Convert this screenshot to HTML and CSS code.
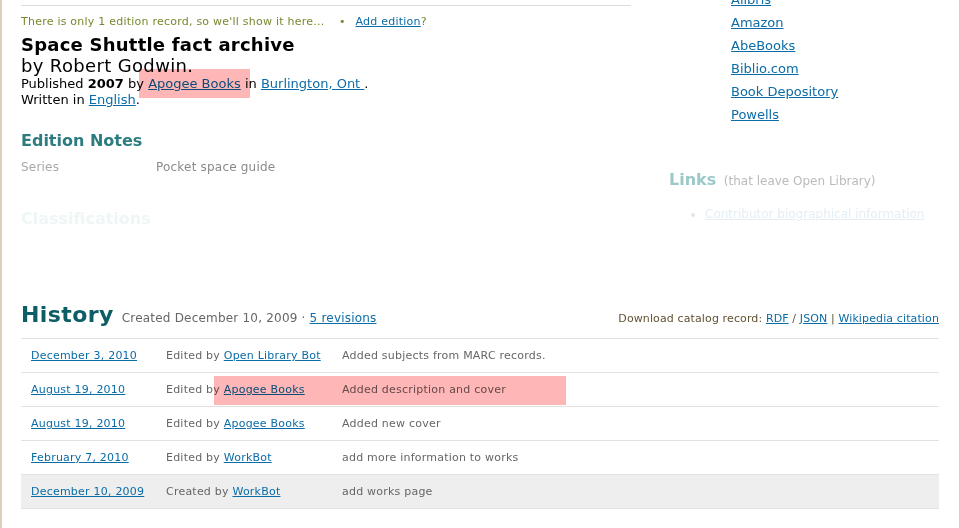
FILE: index.html
```html
<!DOCTYPE html>
<html>
<head>
<meta charset="utf-8">
<link rel="stylesheet" href="styles.css">
</head>
<body>
<div class="page">
  <div class="top">
    <div class="main">
      <div class="rule"></div>
      <p class="notice">There is only 1 edition record, so we'll show it here... <span class="dot">•</span> <a href="#">Add edition</a>?</p>
      <h1 class="title">Space Shuttle fact archive</h1>
      <h2 class="author">by Robert Godwin.</h2>
      <p class="meta">Published <b>2007</b> by <a href="#">Apogee Books</a> in <a href="#">Burlington, Ont </a>.</p>
      <p class="meta">Written in <a href="#">English</a>.</p>
      <h3 class="section">Edition Notes</h3>
      <div class="note-row"><span class="note-label">Series</span><span class="note-value">Pocket space guide</span></div>
      <h3 class="section faded">Classifications</h3>
    </div>
    <div class="side">
      <ul class="shops">
        <li><a href="#">Alibris </a></li>
        <li><a href="#">Amazon </a></li>
        <li><a href="#">AbeBooks </a></li>
        <li><a href="#">Biblio.com </a></li>
        <li><a href="#">Book Depository </a></li>
        <li><a href="#">Powells </a></li>
      </ul>
      <h3 class="links-head">Links <span class="links-sub">(that leave Open Library)</span></h3>
      <ul class="ext">
        <li><a href="#">Contributor biographical information </a></li>
      </ul>
    </div>
  </div>

  <div class="history">
    <div class="history-head">
      <div class="hh-left"><span class="hh-title">History</span> <span class="hh-created">Created December 10, 2009 · <a href="#">5 revisions</a></span></div>
      <div class="hh-right">Download catalog record: <a href="#">RDF</a> / <a href="#">JSON</a> | <a href="#">Wikipedia citation</a></div>
    </div>
    <table class="revs">
      <tr><td class="c-date"><a href="#">December 3, 2010 </a></td><td class="c-by">Edited by <a href="#">Open Library Bot </a></td><td class="c-com">Added subjects from MARC records.</td></tr>
      <tr><td class="c-date"><a href="#">August 19, 2010 </a></td><td class="c-by">Edited by <a href="#">Apogee Books </a></td><td class="c-com">Added description and cover</td></tr>
      <tr><td class="c-date"><a href="#">August 19, 2010 </a></td><td class="c-by">Edited by <a href="#">Apogee Books </a></td><td class="c-com">Added new cover</td></tr>
      <tr><td class="c-date"><a href="#">February 7, 2010 </a></td><td class="c-by">Edited by <a href="#">WorkBot </a></td><td class="c-com">add more information to works</td></tr>
      <tr class="first"><td class="c-date"><a href="#">December 10, 2009 </a></td><td class="c-by">Created by <a href="#">WorkBot </a></td><td class="c-com">add works page</td></tr>
    </table>
  </div>

  <div class="hl hl-1"></div>
  <div class="hl hl-2"></div>
</div>
</body>
</html>
```

FILE: styles.css
```css
html, body {
  margin: 0;
  padding: 0;
  background: #fff;
  overflow: hidden;
}
body {
  font-family: "DejaVu Sans", sans-serif;
  color: #000;
}
a {
  color: #0b6ca8;
  text-decoration: underline;
}
.page {
  position: relative;
  width: 957px;
  height: 528px;
  border-left: 2px solid #d8d2bd;
  border-right: 1px solid #d8d2bd;
  box-sizing: content-box;
  overflow: hidden;
}
.top {
  display: flex;
  height: 292px;
}
.main {
  width: 610px;
  margin-left: 19px;
}
.rule {
  margin-top: 5px;
  height: 1px;
  background: #dcdcdc;
}
.notice {
  margin: 9px 0 0;
  font-size: 11px;
  line-height: 14px;
  color: #76892e;
  letter-spacing: 0.23px;
}
.notice .dot {
  margin: 0 6px 0 11px;
}
.title {
  margin: 5px 0 0;
  font-size: 18px;
  line-height: 22px;
  font-weight: bold;
  letter-spacing: 0.23px;
}
.author {
  margin: 0;
  font-size: 18px;
  line-height: 20px;
  font-weight: normal;
  letter-spacing: 0.35px;
}
.meta {
  margin: 0;
  font-size: 13px;
  line-height: 16px;
}
.section {
  margin: 23px 0 0;
  font-size: 16px;
  line-height: 20px;
  font-weight: bold;
  color: #2c7c80;
}
.section.faded {
  margin-top: 34px;
  color: #eef6f6;
}
.note-row {
  display: flex;
  margin-top: 8px;
  font-size: 12px;
  line-height: 16px;
  letter-spacing: 0.2px;
}
.note-label {
  width: 135px;
  color: #a8a8a8;
}
.note-value {
  color: #8a8a8a;
}
.side {
  flex: 1;
  padding-left: 38px;
}
.shops {
  list-style: none;
  margin: -12px 0 0 62px;
  padding: 0;
  font-size: 13px;
  line-height: 23px;
}
.links-head {
  margin: 44px 0 0;
  font-size: 16px;
  line-height: 20px;
  font-weight: bold;
  color: #9cc8c8;
}
.links-sub {
  font-size: 12px;
  font-weight: normal;
  color: #bbbbbb;
  margin-left: 2px;
}
.ext {
  margin: 15px 0 0;
  padding-left: 36px;
  font-size: 12px;
  line-height: 16px;
  color: #e6e6e6;
}
.ext a {
  color: #e4eef5;
}
.history {
  margin: 0 20px 0 19px;
}
.history-head {
  display: flex;
  justify-content: space-between;
  align-items: baseline;
  height: 46px;
}
.hh-title {
  font-size: 22px;
  font-weight: bold;
  color: #0c5d65;
  line-height: 46px;
  letter-spacing: 0.4px;
}
.hh-created {
  font-size: 12px;
  color: #666;
  margin-left: 3px;
  letter-spacing: 0.2px;
}
.hh-right {
  font-size: 11px;
  color: #615132;
  letter-spacing: 0.12px;
}
.revs {
  width: 100%;
  border-collapse: collapse;
  font-size: 11px;
  letter-spacing: 0.22px;
  color: #666;
}
.revs td {
  height: 33px;
  padding: 0 0 0 10px;
  border-top: 1px solid #e2e2e2;
  border-bottom: 1px solid #e2e2e2;
  vertical-align: middle;
}
.revs .c-date { width: 125px; }
.revs .c-by { width: 166px; }
.revs tr.first td {
  background: #eeeeee;
}
.hl {
  position: absolute;
  background: #ffb6b6;
  mix-blend-mode: multiply;
}
.hl-1 {
  left: 137px;
  top: 69px;
  width: 111px;
  height: 29px;
}
.hl-2 {
  left: 212px;
  top: 376px;
  width: 352px;
  height: 29px;
}
```
